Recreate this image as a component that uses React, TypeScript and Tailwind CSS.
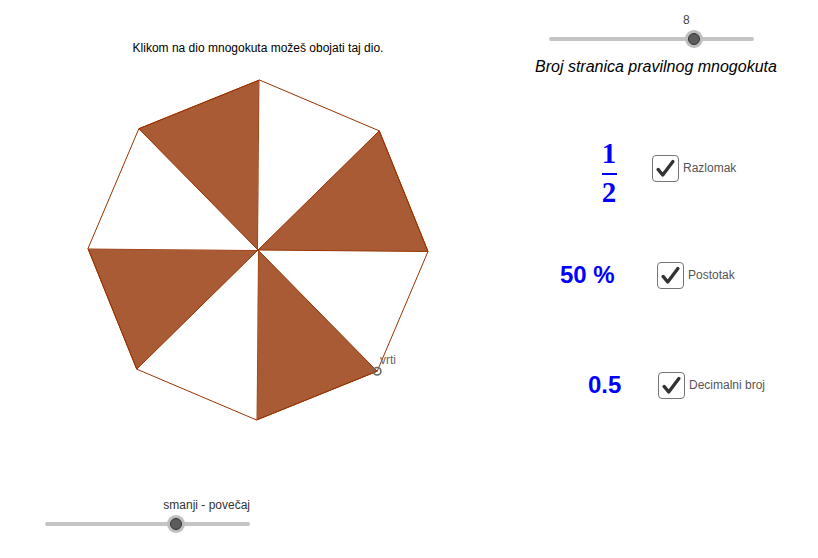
import React from 'react';

const CX = 258;
const CY = 250;
const R = 170;
const ROT = 0.5;

const vertex = (k: number): [number, number] => {
  const a = ((ROT + 45 * k) * Math.PI) / 180;
  return [CX + R * Math.cos(a), CY + R * Math.sin(a)];
};

const verts = Array.from({ length: 8 }, (_, i) => vertex(i));

const Slider: React.FC<{ knob: number }> = ({ knob }) => (
  <div className="relative h-[14px] w-[205px]">
    <div className="absolute left-0 right-0 top-[5px] h-[4px] rounded-full bg-[#c4c4c4]" />
    <div
      className="absolute top-[-2px] flex h-[18px] w-[18px] items-center justify-center rounded-full bg-[#bdbdbd]"
      style={{ left: knob - 9 }}
    >
      <div className="h-[12px] w-[12px] rounded-full border border-[#333] bg-[#5c5c5c]" />
    </div>
  </div>
);

const CheckBox: React.FC<{ label: string }> = ({ label }) => (
  <div className="flex items-center">
    <div className="flex h-[27px] w-[27px] items-center justify-center rounded-[4px] border-[1.5px] border-[#757575] bg-white">
      <svg width="27" height="27" viewBox="0 0 27 27">
        <path d="M5.5 14.5 L10.5 20.5 L21.5 6" fill="none" stroke="#333" strokeWidth="3.6" strokeLinecap="round" strokeLinejoin="round" />
      </svg>
    </div>
    <span className="ml-[4px] text-[12px] leading-[14px] text-[#555]">{label}</span>
  </div>
);

const App: React.FC = () => {
  return (
    <div className="flex h-[558px] w-[818px] overflow-hidden bg-white font-['Liberation_Sans',Arial,sans-serif]">
      {/* lijevo: mnogokut */}
      <div className="flex w-[516px] flex-col">
        <p className="pt-[42px] text-center text-[12px] leading-[12px] text-black">
          Klikom na dio mnogokuta možeš obojati taj dio.
        </p>
        <svg className="mt-[6px] block" width="516" height="380" viewBox="0 60 516 380">
          {verts.map((v, i) => {
            const n = verts[(i + 1) % 8];
            const filled = i % 2 === 1;
            return (
              <polygon
                key={i}
                points={`${CX},${CY} ${v[0]},${v[1]} ${n[0]},${n[1]}`}
                fill={filled ? '#a95b36' : '#ffffff'}
                stroke={filled ? '#993300' : 'none'}
                strokeWidth="1"
              />
            );
          })}
          <polygon points={verts.map((v) => v.join(',')).join(' ')} fill="none" stroke="#993300" strokeWidth="1" />
          <circle cx={verts[1][0]} cy={verts[1][1]} r="3.8" fill="none" stroke="#666" strokeWidth="1.6" />
          <text x="380" y="364" fontSize="12" fill="#666" fontFamily="Liberation Sans, Arial, sans-serif">vrti</text>
        </svg>
        <div className="ml-[45px] mt-[58px] w-[205px]">
          <p className="text-right text-[12px] leading-[14px] text-[#333]">smanji - povečaj</p>
          <div className="mt-[5px]">
            <Slider knob={131} />
          </div>
        </div>
      </div>

      {/* desno: kontrole */}
      <div className="flex flex-1 flex-col">
        <p className="ml-[167px] pt-[13px] text-[12px] leading-[14px] text-[#444]">8</p>
        <div className="ml-[33px] mt-[5px]">
          <Slider knob={145} />
        </div>
        <p className="ml-[19px] mt-[11px] text-[16px] italic leading-[20px] text-black">
          Broj stranica pravilnog mnogokuta
        </p>

        <div className="ml-[85px] mt-[61px] flex h-[60px] items-center">
          <div className="mt-[9px] flex w-[16px] flex-col items-center font-['Liberation_Serif',serif] text-[29px] font-bold leading-[26px] text-[#0000ff]">
            <span>1</span>
            <span className="mb-[4px] mt-[7px] h-[2px] w-[15px] bg-[#0000ff]" />
            <span>2</span>
          </div>
          <div className="ml-[35px]">
            <CheckBox label="Razlomak" />
          </div>
        </div>

        <div className="ml-[44px] mt-[47px] flex h-[60px] items-center">
          <span className="w-[55px] whitespace-nowrap text-[24px] font-bold leading-[28px] text-[#0000ff]">50 %</span>
          <div className="ml-[42px]">
            <CheckBox label="Postotak" />
          </div>
        </div>

        <div className="ml-[72px] mt-[50px] flex h-[60px] items-center">
          <span className="w-[34px] whitespace-nowrap text-[24px] font-bold leading-[28px] text-[#0000ff]">0.5</span>
          <div className="ml-[36px]">
            <CheckBox label="Decimalni broj" />
          </div>
        </div>
      </div>
    </div>
  );
};

export default App;
